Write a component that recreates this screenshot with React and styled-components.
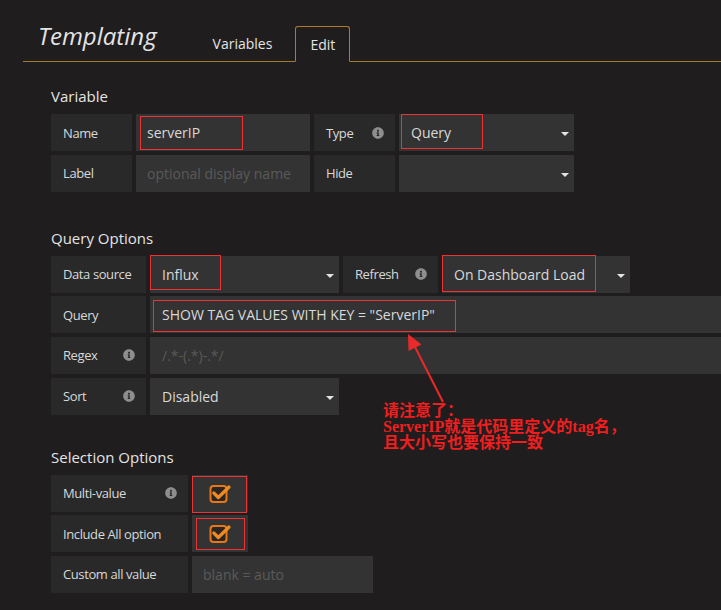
import React from 'react'
import styled, { createGlobalStyle } from 'styled-components'
import { FaInfoCircle } from 'react-icons/fa'

const GlobalStyle = createGlobalStyle`
  body {
    margin: 0;
    background: #1f1d1e;
    font-family: 'Open Sans', 'Noto Sans', sans-serif;
    color: #d8d9da;
  }
`

const Page = styled.div`
  position: relative;
  width: 721px;
  height: 610px;
  overflow: hidden;
  box-sizing: border-box;
  padding: 26px 0 0 23px;
`

const Header = styled.div`
  display: flex;
  align-items: flex-end;
  height: 35px;
  border-bottom: 1px solid #a37b2c;
`

const Title = styled.h1`
  align-self: flex-start;
  margin: 0 40px 0 15px;
  font-size: 24px;
  line-height: 19px;
  font-style: italic;
  font-weight: 400;
  color: #e4e4e4;
`

const Tabs = styled.div`
  display: flex;
  gap: 7px;
  margin-bottom: -1px;
`

const Tab = styled.div`
  box-sizing: border-box;
  height: 36px;
  padding: ${p => (p.$active ? '1px 14px 0' : '0 15px')};
  font-size: 14px;
  line-height: 33px;
  border: 1px solid transparent;
  border-radius: 3px 3px 0 0;
  color: #e4e4e4;
  ${p =>
    p.$active &&
    `
    background: #1f1d1e;
    border-color: #b07a2a;
    border-bottom-color: #1f1d1e;
  `}
`

const Section = styled.div`
  padding-left: 28px;
  margin-top: ${p => p.$top}px;
`

const Heading = styled.h5`
  margin: 0 0 8px;
  font-size: 15px;
  line-height: 20px;
  font-weight: 400;
  color: #e4e4e4;
`

const Rows = styled.div`
  display: flex;
  flex-direction: column;
  gap: 3.67px;
`

const Row = styled.div`
  display: flex;
  gap: 4px;
`

const Label = styled.div`
  flex-shrink: 0;
  box-sizing: border-box;
  width: ${p => p.$w}px;
  height: 37px;
  padding: 0 11px 0 12px;
  display: flex;
  align-items: center;
  justify-content: space-between;
  background: #292929;
  font-size: 13px;
  letter-spacing: -0.4px;
  color: #d8d9da;

  svg {
    color: #8e8e8e;
  }
`

const Field = styled.div`
  position: relative;
  flex-shrink: 0;
  box-sizing: border-box;
  width: ${p => p.$w}px;
  height: 37px;
  padding: 0 5px 0 ${p => p.$pad || 11}px;
  display: flex;
  align-items: center;
  background: #333333;
  font-size: 14px;
  color: #d8d9da;
`

const Placeholder = styled.span`
  color: #5a5a5a;
`

const Caret = styled.span`
  margin-left: auto;
  margin-top: 3px;
  width: 0;
  height: 0;
  border-left: 4px solid transparent;
  border-right: 4px solid transparent;
  border-top: 4px solid #e4e4e4;
`

const CheckCell = styled(Field)`
  justify-content: center;
  padding: 0;
`

const Mark = styled.div`
  position: absolute;
  left: ${p => p.$l}px;
  top: ${p => p.$t}px;
  width: ${p => p.$w}px;
  height: ${p => p.$h}px;
  box-sizing: border-box;
  border: 1px solid #ec3434;
  pointer-events: none;
`

const Note = styled.div`
  position: absolute;
  left: 383px;
  top: 403px;
  font-family: 'Liberation Serif', 'Noto Sans CJK SC', serif;
  font-weight: 700;
  font-size: 16px;
  line-height: 16px;
  color: #f01e1e;
`

const Arrow = styled.svg`
  position: absolute;
  left: 395px;
  top: 325px;
`

const Info = () => <FaInfoCircle size={12} />

const Select = ({ w, children, mark }) => (
  <Field $w={w} $pad={12}>
    {children}
    <Caret />
    {mark}
  </Field>
)

const CheckIcon = () => (
  <svg width="23" height="21" viewBox="0 0 23 21">
    <rect x="1.5" y="3" width="16" height="16" rx="3" fill="#2b2622" stroke="#e8771a" strokeWidth="2" />
    <path d="M4.8 10 L9.3 14.5 L20 4" fill="none" stroke="#f08a24" strokeWidth="3.2" strokeLinecap="round" strokeLinejoin="round" />
  </svg>
)

export default function App() {
  return (
    <>
      <GlobalStyle />
      <Page>
        <Header>
          <Title>Templating</Title>
          <Tabs>
            <Tab>Variables</Tab>
            <Tab $active>Edit</Tab>
          </Tabs>
        </Header>

        <Section $top={24}>
          <Heading>Variable</Heading>
          <Rows>
            <Row>
              <Label $w={81}>Name</Label>
              <Field $w={174}>
                serverIP
                <Mark $l={4} $t={2} $w={103} $h={34} />
              </Field>
              <Label $w={81}>
                Type <Info />
              </Label>
              <Select w={175} mark={<Mark $l={2} $t={0} $w={82} $h={35} />}>
                Query
              </Select>
            </Row>
            <Row>
              <Label $w={81}>Label</Label>
              <Field $w={174}>
                <Placeholder>optional display name</Placeholder>
              </Field>
              <Label $w={81}>Hide</Label>
              <Select w={175} />
            </Row>
          </Rows>
        </Section>

        <Section $top={36}>
          <Heading>Query Options</Heading>
          <Rows>
            <Row>
              <Label $w={95}>Data source</Label>
              <Select w={189} mark={<Mark $l={0} $t={-1} $w={71} $h={35} />}>
                Influx
              </Select>
              <Label $w={95}>
                Refresh <Info />
              </Label>
              <Select w={188} mark={<Mark $l={0} $t={-1} $w={154} $h={37} />}>
                On Dashboard Load
              </Select>
            </Row>
            <Row>
              <Label $w={95}>Query</Label>
              <Field $w={600} $pad={12}>
                SHOW TAG VALUES WITH KEY = "ServerIP"
                <Mark $l={3} $t={4} $w={303} $h={32} />
              </Field>
            </Row>
            <Row>
              <Label $w={95}>
                Regex <Info />
              </Label>
              <Field $w={600} $pad={12}>
                <Placeholder>/.*-(.*)-.*/</Placeholder>
              </Field>
            </Row>
            <Row>
              <Label $w={95}>
                Sort <Info />
              </Label>
              <Select w={189}>Disabled</Select>
            </Row>
          </Rows>
        </Section>

        <Section $top={32}>
          <Heading>Selection Options</Heading>
          <Rows>
            <Row>
              <Label $w={137}>
                Multi-value <Info />
              </Label>
              <CheckCell $w={56}>
                <CheckIcon />
                <Mark $l={0} $t={1} $w={55} $h={37} />
              </CheckCell>
            </Row>
            <Row>
              <Label $w={137}>Include All option</Label>
              <CheckCell $w={56}>
                <CheckIcon />
                <Mark $l={4} $t={3} $w={49} $h={32} />
              </CheckCell>
            </Row>
            <Row>
              <Label $w={137}>Custom all value</Label>
              <Field $w={181}>
                <Placeholder>blank = auto</Placeholder>
              </Field>
            </Row>
          </Rows>
        </Section>

        <Arrow width="60" height="85" viewBox="0 0 60 85">
          <line x1="48" y1="77" x2="20" y2="22" stroke="#e82a2a" strokeWidth="2" />
          <polygon points="13,9 26.5,19.5 13.5,26" fill="#e82a2a" />
        </Arrow>
        <Note>
          请注意了：
          <br />
          ServerIP就是代码里定义的tag名，
          <br />
          且大小写也要保持一致
        </Note>
      </Page>
    </>
  )
}
